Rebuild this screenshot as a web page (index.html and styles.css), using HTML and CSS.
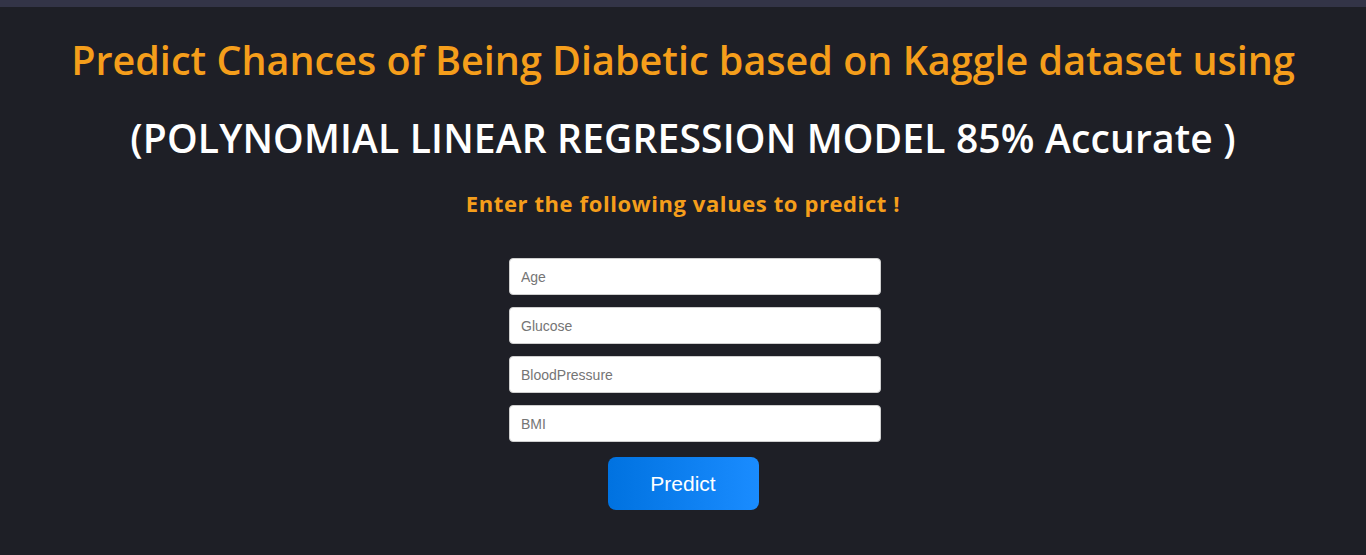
FILE: index.html
```html
<!DOCTYPE html>
<html lang="en">
<head>
<meta charset="utf-8">
<title>Diabetes Prediction</title>
<link rel="stylesheet" href="styles.css">
</head>
<body>
<div class="topbar"></div>
<main class="page">
  <h1 class="title">Predict Chances of Being Diabetic based on Kaggle dataset using</h1>
  <h2 class="subtitle">(POLYNOMIAL LINEAR REGRESSION MODEL 85% Accurate )</h2>
  <h3 class="prompt">Enter the following values to predict !</h3>
  <form class="form">
    <input class="field" type="text" placeholder="Age">
    <input class="field" type="text" placeholder="Glucose">
    <input class="field" type="text" placeholder="BloodPressure">
    <input class="field" type="text" placeholder="BMI">
    <button class="btn" type="button">Predict</button>
  </form>
</main>
</body>
</html>
```
FILE: styles.css
```css
html, body {
  margin: 0;
  padding: 0;
  height: 100%;
  background: #1e1f26;
}
body {
  font-family: "Open Sans", "Liberation Sans", sans-serif;
  overflow: hidden;
}
.topbar {
  height: 7px;
  background: #333447;
}
.page {
  display: flex;
  flex-direction: column;
  align-items: center;
}
.title {
  margin: 29px 0 0;
  font-size: 39.5px;
  font-weight: 600;
  line-height: 48px;
  color: #f59e1b;
  white-space: nowrap;
}
.subtitle {
  margin: 28px 0 0;
  font-size: 39px;
  font-weight: 600;
  line-height: 52px;
  letter-spacing: 0.16px;
  color: #ffffff;
  white-space: nowrap;
}
.prompt {
  margin: 24px 0 0;
  font-size: 22px;
  font-weight: 700;
  line-height: 30px;
  letter-spacing: 0.6px;
  color: #f59e1b;
}
.form {
  margin-top: 40px;
  display: flex;
  flex-direction: column;
  align-items: center;
  gap: 12px;
}
.field {
  box-sizing: border-box;
  width: 372px;
  height: 37px;
  margin-left: 24px;
  padding: 0 11px;
  border: 1px solid #cfcfcf;
  border-radius: 4px;
  background: #fff;
  font-family: "Liberation Sans", Arial, sans-serif;
  font-size: 14px;
  color: #333;
}
.field::placeholder {
  color: #757575;
}
.btn {
  margin-top: 3px;
  width: 151px;
  height: 53px;
  border: none;
  border-radius: 8px;
  background: linear-gradient(90deg, #0072e0, #1a8cff);
  color: #fff;
  font-family: "Liberation Sans", Arial, sans-serif;
  font-size: 21px;
}
```
